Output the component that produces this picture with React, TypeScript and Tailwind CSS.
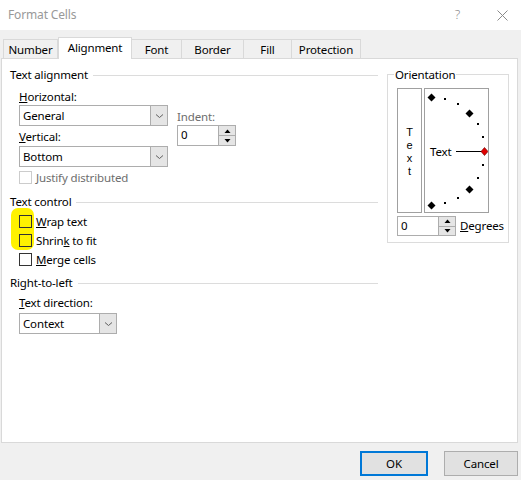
import React from 'react';

const tabs = [
  { label: 'Number', w: 'w-[55px]' },
  { label: 'Alignment', w: 'w-[74px]', active: true },
  { label: 'Font', w: 'w-[51px]' },
  { label: 'Border', w: 'w-[63px]' },
  { label: 'Fill', w: 'w-[49px]' },
  { label: 'Protection', w: 'w-[70px]' },
];

function Legend({ text }: { text: string }) {
  return (
    <div className="flex items-center h-[16px]">
      <span className="pr-[5px] leading-[16px]">{text}</span>
      <div className="flex-1 h-px bg-[#dcdcdc]" />
    </div>
  );
}

function Chevron() {
  return (
    <svg width="9" height="6" viewBox="0 0 9 6">
      <path d="M1 1.5 L4.5 4.5 L8 1.5" fill="none" stroke="#606060" strokeWidth="1" />
    </svg>
  );
}

function Combo({ value, w }: { value: string; w: string }) {
  return (
    <div className={`flex h-[21px] border border-[#adadad] bg-white ${w}`}>
      <div className="flex-1 pl-[3px] leading-[19px]">{value}</div>
      <div className="w-[17px] flex items-center justify-center bg-[#e5e5e5] border-l border-[#adadad]">
        <Chevron />
      </div>
    </div>
  );
}

function Spinner({ value, h }: { value: string; h: string }) {
  return (
    <div className={`flex w-[59px] border border-[#adadad] bg-white ${h}`}>
      <div className="flex-1 pl-[3px] leading-[18px]">{value}</div>
      <div className="w-[17px] flex flex-col bg-[#e5e5e5] border-l border-[#adadad]">
        <div className="flex-1 flex items-center justify-center border-b border-[#adadad]">
          <svg width="7" height="4" viewBox="0 0 7 4"><path d="M0.5 4 L3.5 0.5 L6.5 4 Z" fill="#000" /></svg>
        </div>
        <div className="flex-1 flex items-center justify-center">
          <svg width="7" height="4" viewBox="0 0 7 4"><path d="M0.5 0 L3.5 3.5 L6.5 0 Z" fill="#000" /></svg>
        </div>
      </div>
    </div>
  );
}

function Check({ label, disabled, clear }: { label: React.ReactNode; disabled?: boolean; clear?: boolean }) {
  return (
    <div className="flex items-start h-[19px]">
      <div
        className={`mt-[2px] w-[13px] h-[13px] border ${
          disabled ? 'border-[#cccccc] bg-white' : clear ? 'border-[#333333]' : 'border-[#333333] bg-white'
        }`}
      />
      <span className={`ml-[4px] leading-[17px] ${disabled ? 'text-[#6d6d6d]' : ''}`}>{label}</span>
    </div>
  );
}

function Dial() {
  const cx = 6;
  const cy = 62;
  const r = 54;
  const diamonds = [90, 45, -45, -90];
  const dots = [75, 60, 30, 15, -15, -30, -60, -75];
  const pt = (a: number) => {
    const rad = (a * Math.PI) / 180;
    return [cx + r * Math.cos(rad), cy - r * Math.sin(rad)];
  };
  return (
    <svg width="63" height="123" viewBox="0 0 63 123" className="absolute left-0 top-0">
      {dots.map((a) => {
        const [x, y] = pt(a);
        return <rect key={a} x={Math.round(x) - 1} y={Math.round(y) - 1} width="2" height="2" fill="#000" />;
      })}
      {diamonds.map((a) => {
        const [x, y] = pt(a);
        const X = Math.round(x) + 0.5;
        const Y = Math.round(y) + 0.5;
        return <path key={a} d={`M${X} ${Y - 4} L${X + 4} ${Y} L${X} ${Y + 4} L${X - 4} ${Y} Z`} fill="#000" />;
      })}
      <line x1="31" y1="62.5" x2="57" y2="62.5" stroke="#000" strokeWidth="1" />
      <path d="M59.5 58.5 L63 62.5 L59.5 66.5 L56 62.5 Z" fill="#e00000" stroke="#600" strokeWidth="0.6" />
    </svg>
  );
}

export default function App() {
  return (
    <div
      className="w-[521px] h-[480px] bg-[#f0f0f0] flex flex-col text-[11.5px] tracking-[-0.15px] text-black overflow-hidden"
      style={{ fontFamily: '"Segoe UI", "Noto Sans", sans-serif' }}
    >
      {/* title bar */}
      <div className="h-[30px] bg-white flex items-center justify-between pl-[8px] pr-[13px]">
        <span className="text-[#999999] text-[12px]">Format Cells</span>
        <div className="flex items-center gap-[37px]">
          <span className="text-[#8a8a8a] text-[13px] font-light">?</span>
          <svg width="11" height="11" viewBox="0 0 11 11">
            <path d="M0.5 0.5 L10.5 10.5 M10.5 0.5 L0.5 10.5" stroke="#8a8a8a" strokeWidth="1" />
          </svg>
        </div>
      </div>

      {/* tabs */}
      <div className="flex items-end pl-[3px] pt-[7px] h-[29px] relative z-10 -mb-px">
        {tabs.map((t, i) =>
          t.active ? (
            <div
              key={t.label}
              className={`${t.w} h-[22px] bg-white border border-b-0 border-[#d9d9d9] flex items-center justify-center pb-[1px]`}
            >
              {t.label}
            </div>
          ) : (
            <div
              key={t.label}
              className={`${t.w} h-[20px] border border-b-0 border-[#d9d9d9] ${
                i > 1 ? '-ml-px' : ''
              } flex items-center justify-center pt-[1px]`}
            >
              {t.label}
            </div>
          )
        )}
      </div>

      {/* panel */}
      <div className="ml-[1px] w-[517px] h-[385px] bg-white border border-[#d9d9d9] flex">
        {/* left column */}
        <div className="ml-[8px] w-[368px] flex flex-col pt-[8px]">
          <Legend text="Text alignment" />
          <div className="flex ml-[9px] mt-[6px]">
            <div className="flex flex-col w-[149px]">
              <span className="leading-[16px]"><u>H</u>orizontal:</span>
              <Combo value="General" w="w-[149px]" />
              <span className="leading-[16px] mt-[3px]"><u>V</u>ertical:</span>
              <div className="mt-[1px]"><Combo value="Bottom" w="w-[149px]" /></div>
              <div className="mt-[2px]"><Check label="Justify distributed" disabled /></div>
            </div>
            <div className="ml-[9px] pt-[20px] flex flex-col">
              <span className="leading-[16px] text-[#6d6d6d]">Indent:</span>
              <Spinner value="0" h="h-[21px]" />
            </div>
          </div>

          <div className="mt-[6px]"><Legend text="Text control" /></div>
          <div className="ml-[9px] mt-[3px] flex flex-col relative">
            <div className="absolute -left-[8px] -top-[5px] w-[23px] h-[42px] rounded-[7px] bg-[#fff200]" />
            <div className="relative">
              <Check clear label={<><u>W</u>rap text</>} />
              <Check clear label={<>Shrin<u>k</u> to fit</>} />
              <Check label={<><u>M</u>erge cells</>} />
            </div>
          </div>

          <div className="mt-[5px]"><Legend text="Right-to-left" /></div>
          <div className="ml-[9px] mt-[4px] flex flex-col">
            <span className="leading-[16px]"><u>T</u>ext direction:</span>
            <div className="mt-[2px]"><Combo value="Context" w="w-[98px]" /></div>
          </div>
        </div>

        {/* right column */}
        <div className="ml-[9px] w-[122px] pt-[15px]">
          <div className="relative h-[169px] border border-[#dcdcdc] pl-[9px] pt-[13px]">
            <span className="absolute left-[6px] -top-[8px] bg-white px-[1px] leading-[16px]">Orientation</span>
            <div className="flex gap-[2px]">
              <div
                className="w-[25px] h-[125px] border border-[#a0a0a0] flex flex-col items-center pt-[37px] text-[11px] leading-[13px]"
                style={{ fontFamily: '"Liberation Sans", sans-serif' }}
              >
                <span>T</span>
                <span>e</span>
                <span>x</span>
                <span>t</span>
              </div>
              <div className="relative w-[65px] h-[125px] border border-[#a0a0a0]">
                <Dial />
                <span className="absolute left-[5px] top-[55px] leading-[16px]">Text</span>
              </div>
            </div>
            <div className="flex items-center mt-[3px]">
              <Spinner value="0" h="h-[20px]" />
              <span className="ml-[4px]"><u>D</u>egrees</span>
            </div>
          </div>
        </div>
      </div>

      {/* buttons */}
      <div className="flex justify-end gap-[16px] pr-[3px] mt-[8px]">
        <button className="w-[68px] h-[25px] bg-[#e1e1e1] border-2 border-[#0078d7]">OK</button>
        <button className="w-[74px] h-[25px] bg-[#e1e1e1] border border-[#adadad]">Cancel</button>
      </div>
    </div>
  );
}
